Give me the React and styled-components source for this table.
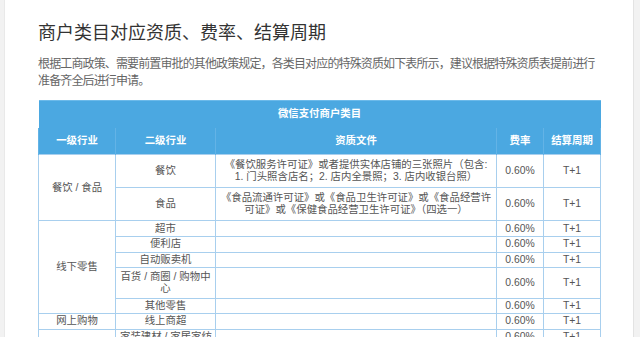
import React from 'react';
import styled, { createGlobalStyle } from 'styled-components';

const GlobalStyle = createGlobalStyle`
  html, body {
    margin: 0;
    padding: 0;
    background: #f2f2f2;
  }
  body {
    font-family: "Liberation Sans", "Noto Sans CJK SC", sans-serif;
  }
`;

const Page = styled.div`
  display: flex;
  height: 337px;
  overflow: hidden;
  padding-left: 4px;
`;

const Card = styled.div`
  width: 562px;
  background: #fff;
  border-left: 1px solid #e9e9e9;
  border-right: 1px solid #e3e3e3;
  padding: 21px 33px 0 33px;
`;

const Title = styled.h1`
  margin: 0;
  font-size: 18px;
  line-height: 24px;
  font-weight: 400;
  color: #333;
`;

const Intro = styled.p`
  margin: 11px 0 10px;
  font-size: 12px;
  letter-spacing: -0.87px;
  line-height: 17px;
  color: #666;
  white-space: nowrap;
`;

const Table = styled.table`
  width: 562px;
  border-collapse: collapse;
  table-layout: fixed;
  font-size: 10.4px;
  line-height: 11.7px;
  color: #555;
`;

const HeadRow = styled.tr`
  height: ${(p) => p.h}px;
  background: #4ba8e1;
`;

const Caption = styled.th`
  border-top: 1px solid #6cbaea;
  color: #fff;
  font-weight: 700;
  padding: 0;
  vertical-align: middle;
`;

const Th = styled.th`
  color: #fff;
  font-weight: 700;
  padding: 0;
  border-left: 1px solid #63b3e6;
  border-right: 1px solid #63b3e6;
  vertical-align: middle;
`;

const Row = styled.tr`
  height: ${(p) => p.h}px;
`;

const Td = styled.td`
  border: 1px solid #a8cfee;
  padding: 0 4px;
  text-align: center;
  vertical-align: middle;
  white-space: ${(p) => (p.$nowrap ? 'nowrap' : 'normal')};
`;

const groups = [
  {
    name: '餐饮 / 食品',
    items: [
      {
        sub: '餐饮',
        h: 33,
        doc: ['《餐饮服务许可证》或者提供实体店铺的三张照片（包含:', '1. 门头照含店名；2. 店内全景照；3. 店内收银台照）'],
      },
      {
        sub: '食品',
        h: 33,
        doc: ['《食品流通许可证》或《食品卫生许可证》或《食品经营许', '可证》或《保健食品经营卫生许可证》（四选一）'],
      },
    ],
  },
  {
    name: '线下零售',
    items: [
      { sub: '超市', h: 16 },
      { sub: '便利店', h: 15.5 },
      { sub: '自动贩卖机', h: 15.5 },
      { sub: '百货 / 商圈 / 购物中心', h: 30.5 },
      { sub: '其他零售', h: 15.5 },
    ],
  },
  {
    name: '网上购物',
    items: [{ sub: '线上商超', h: 15.5 }],
  },
  {
    name: '居民生活 / 商业服务',
    items: [
      { sub: '家装建材 / 家居家纺', h: 15.5, nowrap: true },
      { sub: '宠物 / 宠物食品', h: 15.5 },
      { sub: '摄影 / 扩印', h: 15.5 },
    ],
  },
];

export default function App() {
  return (
    <>
      <GlobalStyle />
      <Page>
        <Card>
          <Title>商户类目对应资质、费率、结算周期</Title>
          <Intro>
            根据工商政策、需要前置审批的其他政策规定，各类目对应的特殊资质如下表所示，建议根据特殊资质表提前进行
            <br />
            准备齐全后进行申请。
          </Intro>
          <Table>
            <colgroup>
              <col style={{ width: 77 }} />
              <col style={{ width: 100 }} />
              <col style={{ width: 281 }} />
              <col style={{ width: 47 }} />
              <col style={{ width: 57 }} />
            </colgroup>
            <thead>
              <HeadRow h={27}>
                <Caption colSpan={5}>微信支付商户类目</Caption>
              </HeadRow>
              <HeadRow h={27}>
                <Th>一级行业</Th>
                <Th>二级行业</Th>
                <Th>资质文件</Th>
                <Th>费率</Th>
                <Th>结算周期</Th>
              </HeadRow>
            </thead>
            <tbody>
              {groups.map((g) =>
                g.items.map((it, i) => (
                  <Row key={g.name + it.sub} h={it.h}>
                    {i === 0 && <Td rowSpan={g.items.length}>{g.name}</Td>}
                    <Td $nowrap={!!it.nowrap}>{it.sub}</Td>
                    <Td $nowrap={!!it.doc}>
                      {it.doc && (
                        <>
                          {it.doc[0]}
                          <br />
                          {it.doc[1]}
                        </>
                      )}
                    </Td>
                    <Td>0.60%</Td>
                    <Td>T+1</Td>
                  </Row>
                ))
              )}
            </tbody>
          </Table>
        </Card>
      </Page>
    </>
  );
}
